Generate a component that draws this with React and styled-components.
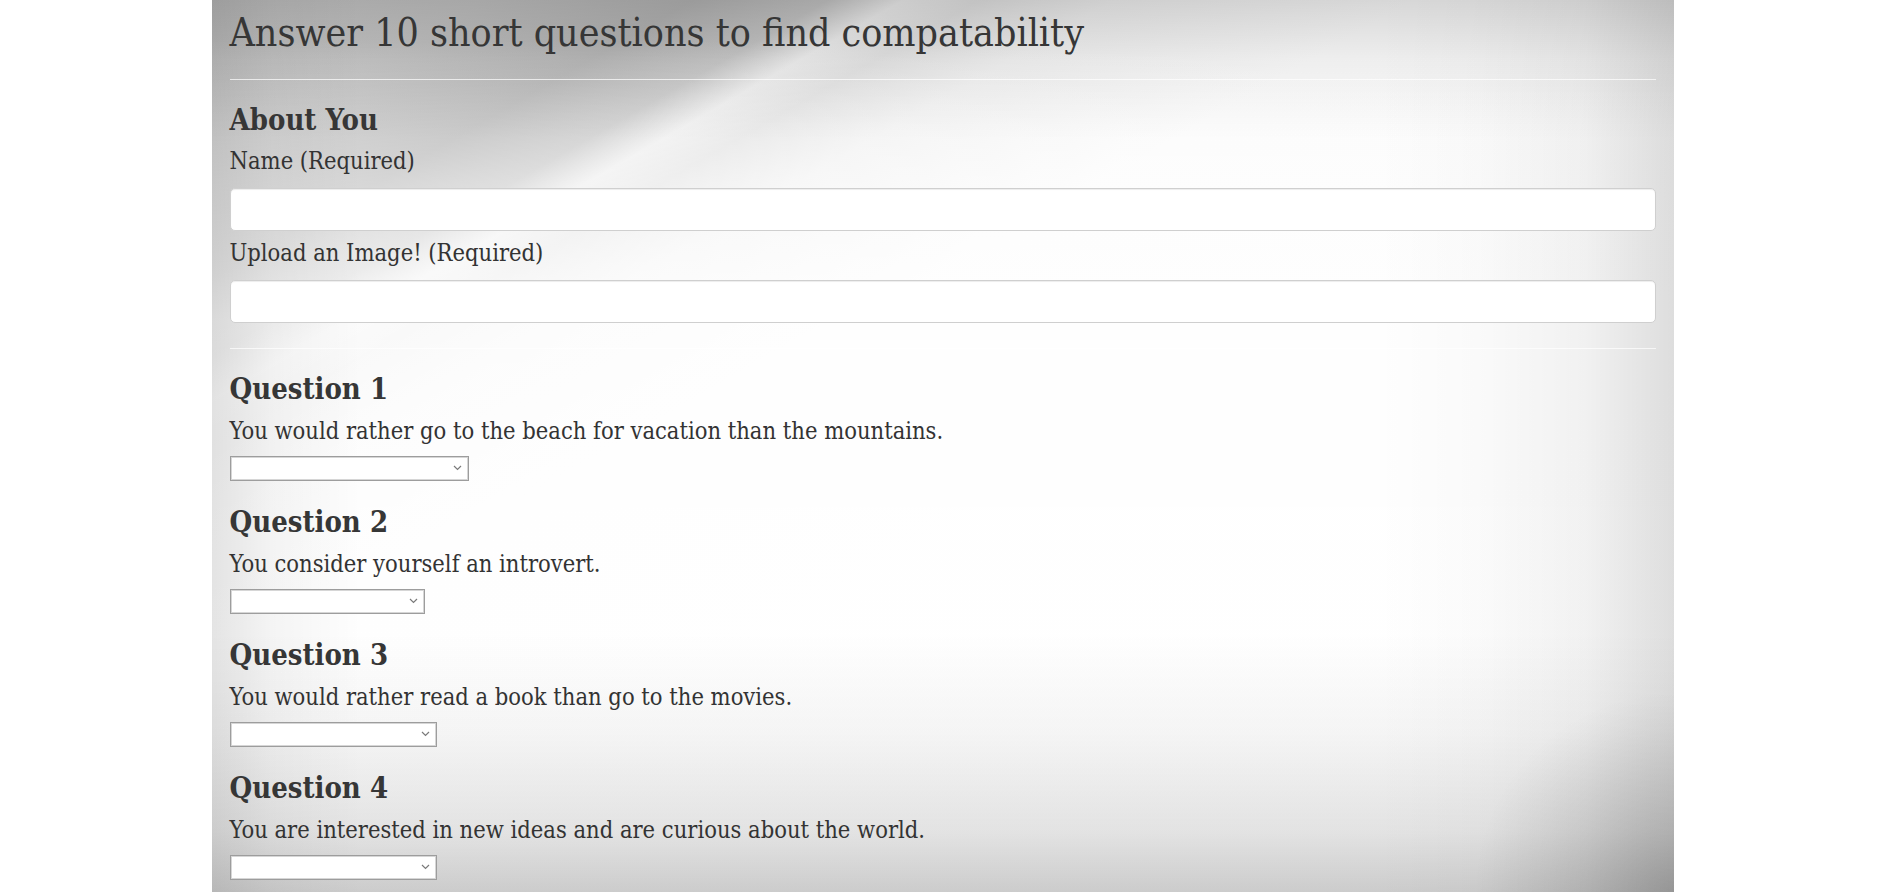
import React from 'react';
import styled, { createGlobalStyle } from 'styled-components';

const GlobalStyle = createGlobalStyle`
  html, body {
    margin: 0;
    padding: 0;
    background: #fff;
  }
  body {
    font-family: "DejaVu Serif Condensed", "DejaVu Serif", serif;
    font-stretch: condensed;
    color: #333;
  }
  * {
    box-sizing: border-box;
  }
`;

const Page = styled.div`
  width: 1462px;
  min-height: 100vh;
  margin: 0 0 0 calc(50% - 729px);
  padding: 12px 18px 0;
  background-color: #fbfbfb;
  background-repeat: no-repeat;
  background-size: 100% 892px;
  background-image:
    linear-gradient(to top, rgba(0, 0, 0, 0.2) 0, rgba(0, 0, 0, 0.11) 60px, rgba(0, 0, 0, 0.04) 160px, transparent 260px),
    radial-gradient(circle at 100% 100%, rgba(0, 0, 0, 0.16) 0, transparent 200px),
    linear-gradient(to left, rgba(0, 0, 0, 0.13) 0, rgba(0, 0, 0, 0.05) 90px, rgba(0, 0, 0, 0.015) 200px, transparent 300px),
    linear-gradient(to right, rgba(0, 0, 0, 0.1) 0, rgba(0, 0, 0, 0.04) 60px, transparent 150px),
    linear-gradient(to bottom, rgba(0, 0, 0, 0.14) 0, rgba(0, 0, 0, 0.05) 60px, transparent 140px),
    linear-gradient(to bottom, rgba(255, 255, 255, 0) 40px, rgba(255, 255, 255, 0.45) 180px, rgba(255, 255, 255, 0.8) 320px, rgba(255, 255, 255, 0.9) 100%),
    linear-gradient(150deg, #cbcbcb 0%, #c2c2c2 9%, #b4b4b4 16%, #c4c4c4 20.5%, #ededed 23%, #e2e2e2 25.5%, #f1f1f1 30%, #fbfbfb 40%, #fdfdfd 100%);
`;

const Title = styled.h1`
  margin: 0;
  font-size: 39px;
  font-weight: 400;
  line-height: 42px;
  color: #363636;
`;

const Rule = styled.hr`
  margin: ${(p) => p.$top}px 0 ${(p) => p.$bottom}px;
  border: 0;
  border-top: 1px solid rgba(255, 255, 255, 0.7);
`;

const Heading = styled.h3`
  margin: 0;
  font-size: 29px;
  font-weight: 700;
  line-height: 30px;
  color: #363636;
`;

const Label = styled.label`
  display: block;
  margin: ${(p) => p.$top}px 0 12px;
  font-size: 23.5px;
  line-height: 30px;
`;

const TextInput = styled.input`
  display: block;
  width: 100%;
  height: 43px;
  margin: 0;
  padding: 6px 12px;
  font: inherit;
  background: #fff;
  border: 1px solid #cfcfcf;
  border-radius: 5px;
  box-shadow: inset 0 1px 1px rgba(0, 0, 0, 0.075);
`;

const Question = styled.section`
  padding-top: ${(p) => (p.$first ? 25 : 26)}px;
`;

const Prompt = styled.p`
  margin: 12px 0 10px;
  font-size: 23.5px;
  line-height: 30px;
`;

const SelectWrap = styled.div`
  position: relative;
  display: block;
  width: ${(p) => p.$width}px;
  height: 25px;
`;

const Select = styled.select`
  appearance: none;
  display: block;
  width: 100%;
  height: 100%;
  margin: 0;
  padding: 0 20px 0 4px;
  font-family: "Liberation Sans", Arial, sans-serif;
  font-size: 13px;
  background: #fff;
  border: 1px solid #9d9d9d;
  box-shadow: inset 0 0 0 1px #d6d6d6;
  border-radius: 0;
  color: #222;
`;

const Chevron = styled.svg`
  position: absolute;
  right: 7px;
  top: 9px;
  pointer-events: none;
`;

const questions = [
  { text: 'You would rather go to the beach for vacation than the mountains.', width: 239 },
  { text: 'You consider yourself an introvert.', width: 195 },
  { text: 'You would rather read a book than go to the movies.', width: 207 },
  { text: 'You are interested in new ideas and are curious about the world.', width: 207 },
];

const options = ['', '1 (Strongly Disagree)', '2', '3', '4', '5 (Strongly Agree)'];

const ScaleSelect = ({ width }) => (
  <SelectWrap $width={width}>
    <Select defaultValue="">
      {options.map((o) => (
        <option key={o || 'blank'} value={o}>
          {o}
        </option>
      ))}
    </Select>
    <Chevron width="9" height="6" viewBox="0 0 9 6">
      <path d="M1 1l3.5 3.5L8 1" fill="none" stroke="#7a7a7a" strokeWidth="1.2" />
    </Chevron>
  </SelectWrap>
);

const App = () => (
  <>
    <GlobalStyle />
    <Page>
      <Title>Answer 10 short questions to find compatability</Title>
      <Rule $top={25} $bottom={25} />
      <Heading>About You</Heading>
      <Label $top={11}>Name (Required)</Label>
      <TextInput type="text" />
      <Label $top={7}>Upload an Image! (Required)</Label>
      <TextInput type="text" />
      <Rule $top={25} $bottom={0} />
      {questions.map((q, i) => (
        <Question key={q.text} $first={i === 0}>
          <Heading>Question {i + 1}</Heading>
          <Prompt>{q.text}</Prompt>
          <ScaleSelect width={q.width} />
        </Question>
      ))}
    </Page>
  </>
);

export default App;
